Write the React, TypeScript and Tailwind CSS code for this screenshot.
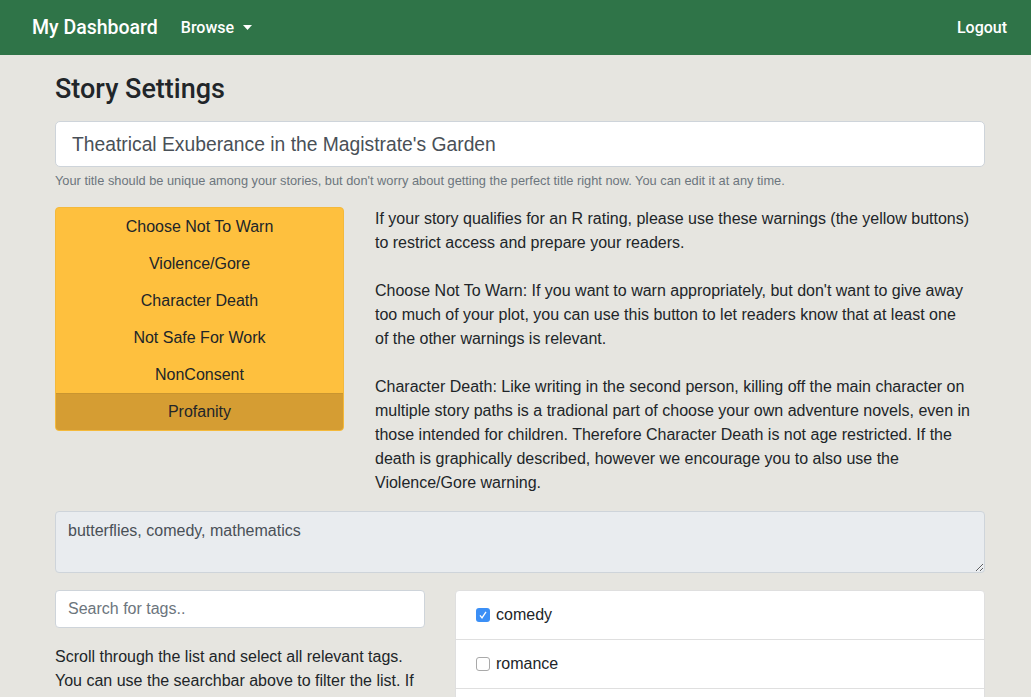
import React from "react";

const warnings = [
  "Choose Not To Warn",
  "Violence/Gore",
  "Character Death",
  "Not Safe For Work",
  "NonConsent",
  "Profanity",
];

function Check({ checked }: { checked: boolean }) {
  return checked ? (
    <span className="inline-flex w-[14px] h-[14px] rounded-[3px] bg-[#3b8ff6] items-center justify-center">
      <svg width="10" height="10" viewBox="0 0 10 10">
        <path d="M2 5.4 L4 7.8 L8 1.8" fill="none" stroke="white" strokeWidth="1.3" />
      </svg>
    </span>
  ) : (
    <span className="inline-block w-[14px] h-[14px] rounded-[3px] bg-white border border-[#a9a9a9]" />
  );
}

export default function App() {
  return (
    <div
      className="bg-[#e6e5e0] text-[#212529] overflow-hidden h-[697px]"
      style={{ fontFamily: '"Liberation Sans", Arial, sans-serif' }}
    >
      <nav
        className="h-[55px] bg-[#2f7448] flex items-center pl-[32px] pr-[24px] text-white"
        style={{ fontFamily: 'Roboto, "Liberation Sans", sans-serif' }}
      >
        <span className="text-[19.5px] font-medium">My Dashboard</span>
        <span className="ml-[23px] text-[16px] font-medium flex items-center">
          Browse
          <svg className="ml-[9px]" width="9" height="6" viewBox="0 0 9 6">
            <path d="M0 0 L9 0 L4.5 5 Z" fill="white" />
          </svg>
        </span>
        <span className="ml-auto text-[16px] font-medium">Logout</span>
      </nav>

      <div className="ml-[55px] w-[930px]">
        <h3
          className="pt-[17px] text-[27px] leading-[34px] font-medium"
          style={{ fontFamily: 'Roboto, "Liberation Sans", sans-serif' }}
        >
          Story Settings
        </h3>
        <div className="mt-[15px] h-[46px] bg-white border border-[#ced4da] rounded-[5px] flex items-center px-[16px] pt-[2px] text-[19.3px] text-[#495057]">
          Theatrical Exuberance in the Magistrate's Garden
        </div>
        <p className="mt-[4px] text-[12.8px] leading-[19px] text-[#6c757d]">
          Your title should be unique among your stories, but don't worry about getting the perfect title right now. You can edit it at any time.
        </p>

        <div className="mt-[17px] flex gap-[30px]">
          <div className="w-[289px] shrink-0 rounded-[4px] overflow-hidden bg-[#fec03e] self-start border border-[#f4b93b]">
            {warnings.map((w, i) => (
              <div
                key={w}
                className={
                  i === 5
                    ? "h-[37px] flex items-center justify-center text-[16px] bg-[#d59d33] border-t border-[#c99530]"
                    : "h-[37px] flex items-center justify-center text-[16px]"
                }
              >
                {w}
              </div>
            ))}
          </div>
          <div className="w-[597px] ml-[1px] text-[16px] leading-[24px]">
            <p>
              If your story qualifies for an R rating, please use these warnings (the yellow buttons) to restrict access and prepare your readers.
            </p>
            <p className="mt-[24px]">
              Choose Not To Warn: If you want to warn appropriately, but don't want to give away too much of your plot, you can use this button to let readers know that at least one of the other warnings is relevant.
            </p>
            <p className="mt-[24px]">
              Character Death: Like writing in the second person, killing off the main character on multiple story paths is a tradional part of choose your own adventure novels, even in those intended for children. Therefore Character Death is not age restricted. If the death is graphically described, however we encourage you to also use the Violence/Gore warning.
            </p>
          </div>
        </div>

        <textarea
          readOnly
          defaultValue="butterflies, comedy, mathematics"
          className="mt-[16px] block w-[930px] h-[62px] bg-[#e9ecef] border border-[#ced4da] rounded-[4px] px-[12px] pt-[7px] pb-[5px] text-[16px] leading-[24px] text-[#495057] outline-none resize-y"
        />

        <div className="mt-[17px] flex gap-[30px]">
          <div className="w-[370px] shrink-0">
            <div className="h-[38px] bg-white border border-[#ced4da] rounded-[4px] flex items-center px-[12px] text-[16px] text-[#6c757d]">
              Search for tags..
            </div>
            <p className="mt-[17px] text-[16px] leading-[24px]">
              Scroll through the list and select all relevant tags. You can use the searchbar above to filter the list. If you can't find the tag you want, you can add a new one below.
            </p>
          </div>
          <div className="w-[530px] bg-white border border-[#dfdfdf] rounded-[4px]">
            <div className="h-[49px] flex items-center px-[20px] border-b border-[#dfdfdf] text-[16px]">
              <Check checked />
              <span className="ml-[6px]">comedy</span>
            </div>
            <div className="h-[49px] flex items-center px-[20px] border-b border-[#dfdfdf] text-[16px]">
              <Check checked={false} />
              <span className="ml-[6px]">romance</span>
            </div>
            <div className="h-[49px] flex items-center px-[20px] text-[16px]">
              <Check checked={false} />
              <span className="ml-[6px]">mathematics</span>
            </div>
          </div>
        </div>
      </div>
    </div>
  );
}
